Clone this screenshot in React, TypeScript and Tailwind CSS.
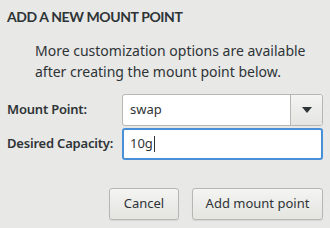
export default function App() {
  return (
    <div
      className="w-[330px] h-[228px] bg-[#e8e8e7] text-[#2e3436] px-[7px] pt-[8px]"
      style={{ fontFamily: '"Noto Sans", "DejaVu Sans", sans-serif' }}
    >
      <h1
        className="text-[14px] font-bold leading-[18px] tracking-[-0.4px]"
        style={{ fontFamily: 'Lato, "Noto Sans", sans-serif' }}
      >
        ADD A NEW MOUNT POINT
      </h1>

      <p className="mt-[14px] pl-[28px] text-[14px] leading-[21px]">
        More customization options are available after creating the mount point below.
      </p>

      <div className="mt-[12px] grid grid-cols-[115px_1fr] gap-y-[2px] items-center">
        <label className="text-[13px] font-semibold tracking-[-0.2px]">Mount Point:</label>
        <div className="flex h-[32px] border border-[#b6b6b3] rounded-[3px] bg-white">
          <span className="flex-1 flex items-center pl-[7px] text-[13px]">swap</span>
          <div className="w-[32px] flex items-center justify-center border-l border-[#b6b6b3] bg-gradient-to-b from-[#f4f4f2] to-[#e4e4e1] rounded-r-[3px]">
            <svg width="10" height="6" viewBox="0 0 10 6">
              <path d="M0 0h10L5 6z" fill="#2e3436" />
            </svg>
          </div>
        </div>

        <label className="text-[13px] font-semibold tracking-[-0.2px]">Desired Capacity:</label>
        <div className="flex items-center h-[32px] border-2 border-[#4a90d9] rounded-[3px] bg-white pl-[6px] text-[13px]">
          10g<span className="ml-[1px] w-[1px] h-[16px] bg-[#2e3436]" />
        </div>
      </div>

      <div className="mt-[28px] flex justify-end gap-[13px]">
        <button className="w-[70px] h-[32px] rounded-[3px] border border-[#b6b6b3] bg-gradient-to-b from-[#f4f4f2] to-[#e4e4e1] text-[13px] text-[#2e3436] shadow-[0_1px_1px_rgba(0,0,0,0.08)]">
          Cancel
        </button>
        <button className="w-[131px] h-[32px] rounded-[3px] border border-[#b6b6b3] bg-gradient-to-b from-[#f4f4f2] to-[#e4e4e1] text-[13px] text-[#2e3436] shadow-[0_1px_1px_rgba(0,0,0,0.08)]">
          Add mount point
        </button>
      </div>
    </div>
  );
}
